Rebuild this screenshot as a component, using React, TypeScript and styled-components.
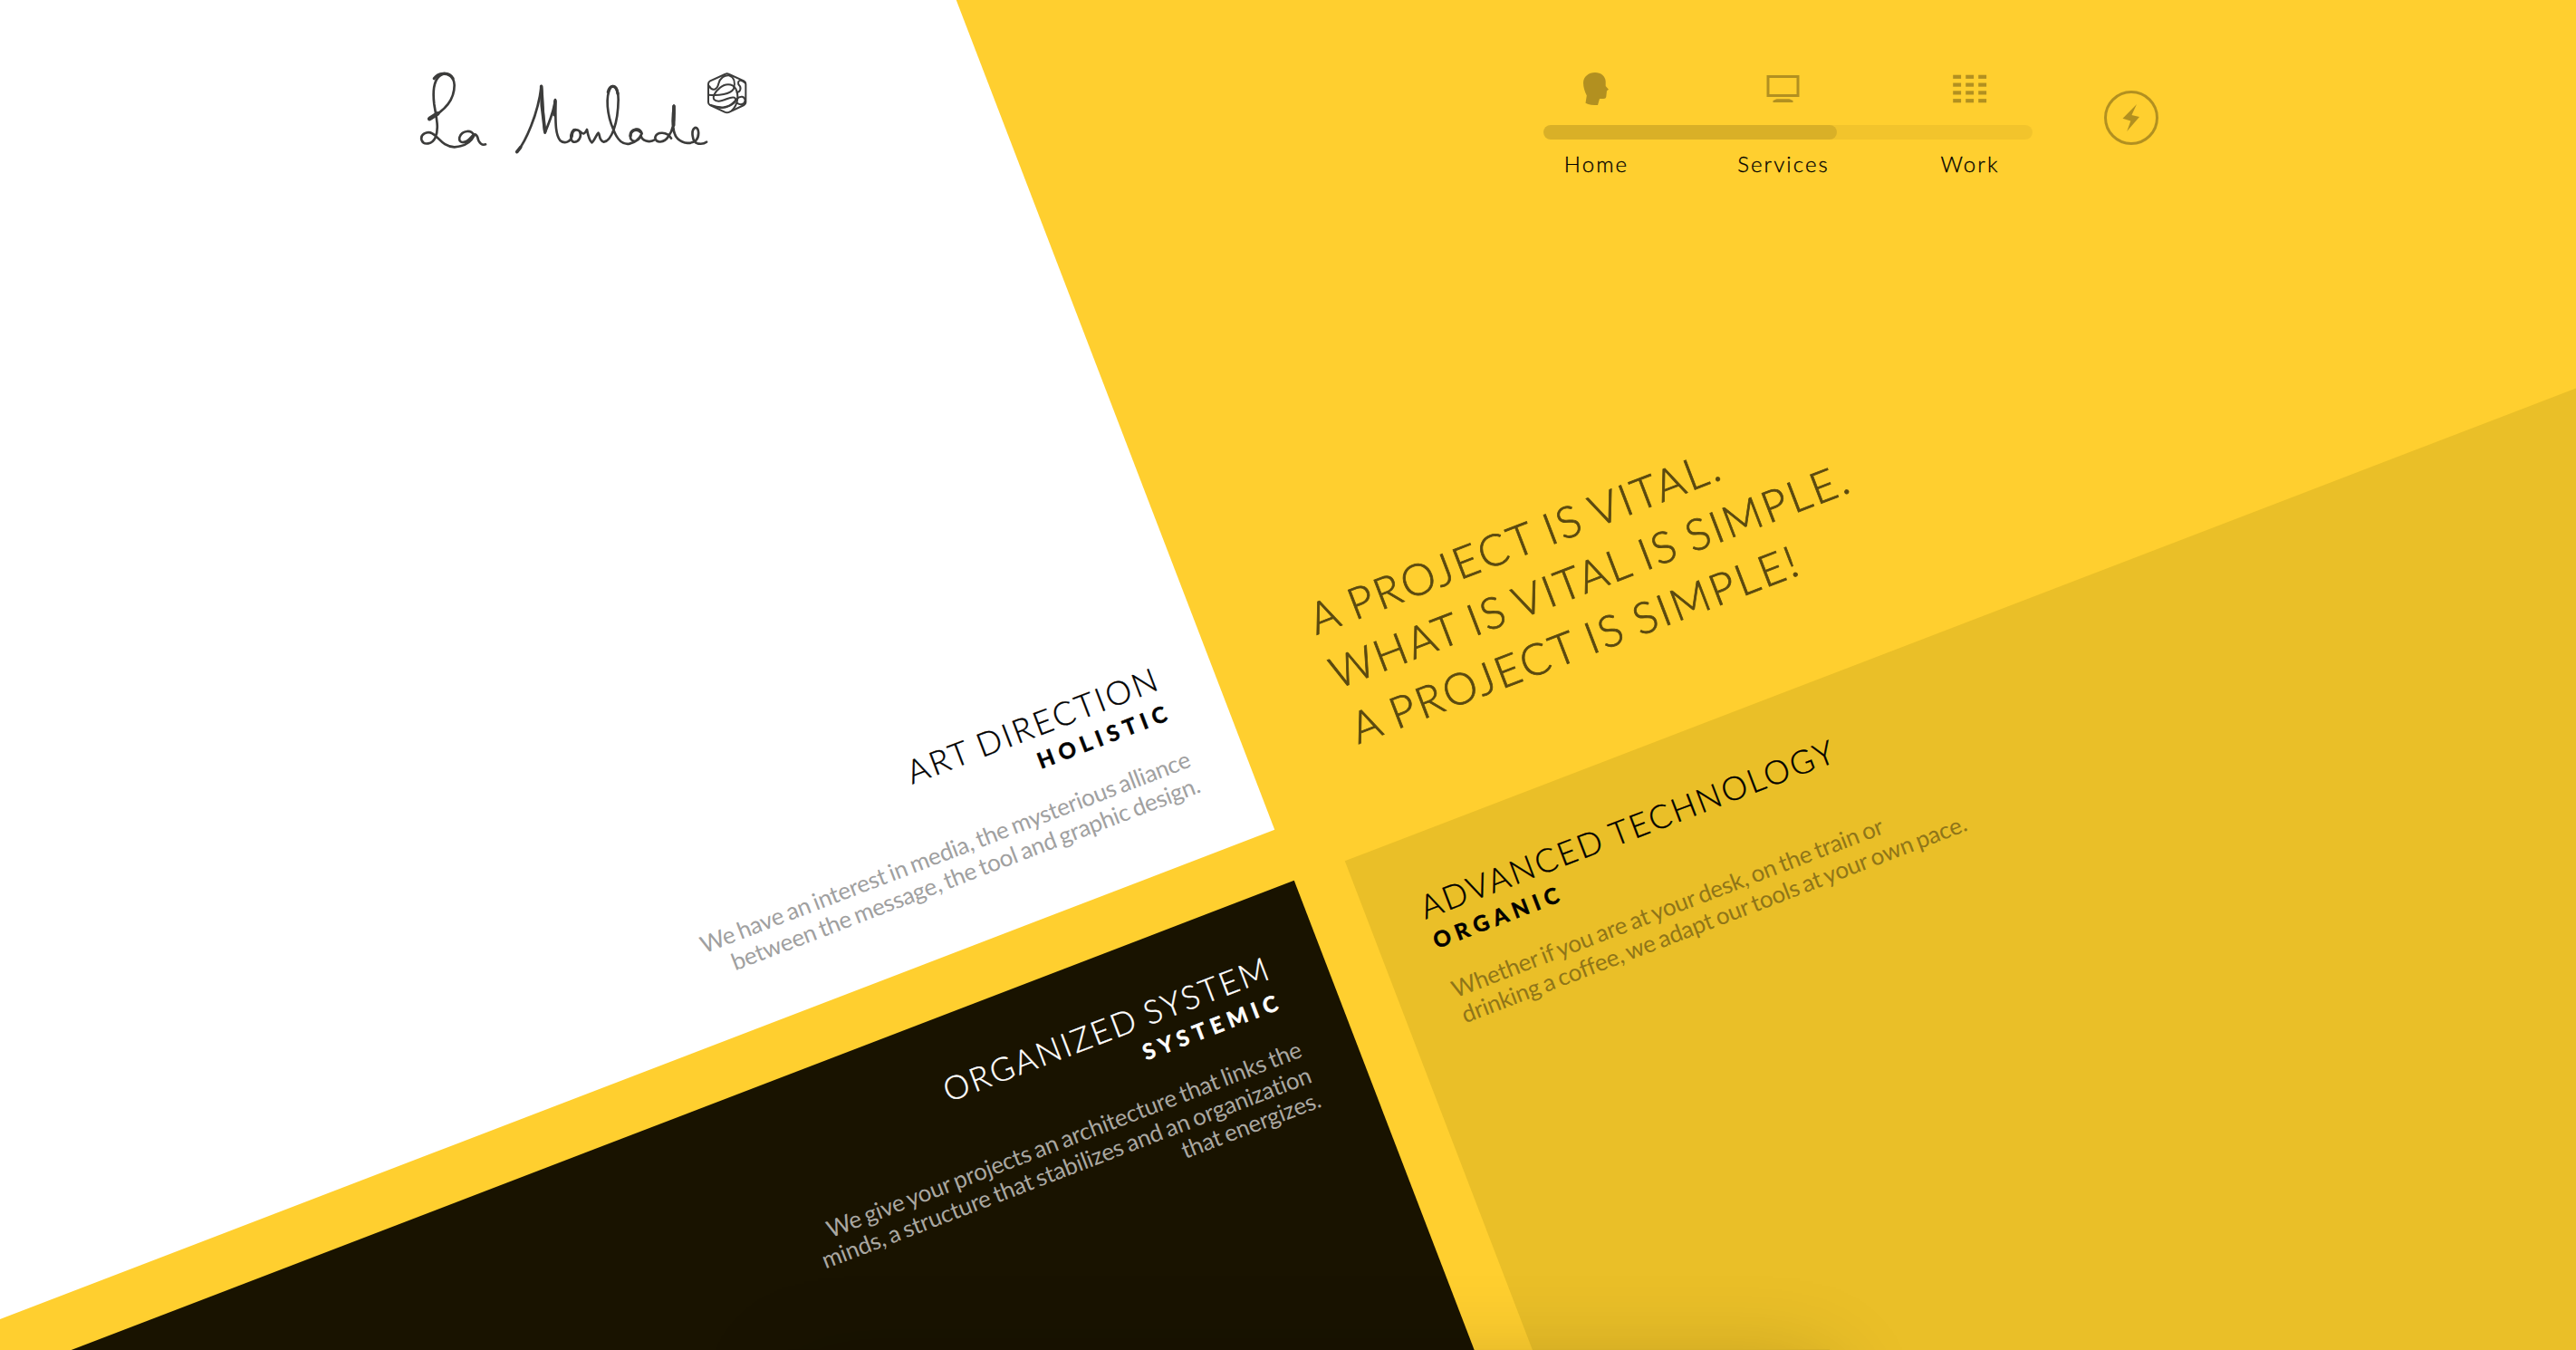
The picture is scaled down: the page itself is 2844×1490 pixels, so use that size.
import React from 'react';
import styled, { createGlobalStyle } from 'styled-components';

const GlobalStyle = createGlobalStyle`
  html, body { margin: 0; padding: 0; background: #ffcf2f; }
  * { box-sizing: border-box; }
`;

const Page = styled.main`
  position: relative;
  width: 2844px;
  height: 1490px;
  overflow: hidden;
  background: #ffcf2f;
  font-family: Lato, 'Open Sans', sans-serif;
  font-weight: 300;
  color: #000;
`;

/* Four quadrants tilted together around the crossing of the two gutters. */
const Board = styled.div`
  position: absolute;
  left: -384px;
  top: -897.5px;
  display: grid;
  grid-template: repeat(2, 1800px) / repeat(2, 1800px);
  gap: 60px;
  transform: rotate(-21deg);
`;

type Tone = 'white' | 'yellow' | 'black' | 'gold';

const toneBackground: Record<Tone, string> = {
  white: '#fff',
  yellow: 'transparent',
  black: '#191300',
  gold: '#eabf28',
};

const Quadrant = styled.section<{ $tone: Tone; $side: 'left' | 'right'; $edge: 'top' | 'bottom' }>`
  display: flex;
  flex-direction: column;
  align-items: ${(p) => (p.$side === 'left' ? 'flex-start' : 'flex-end')};
  justify-content: ${(p) => (p.$edge === 'top' ? 'flex-start' : 'flex-end')};
  text-align: ${(p) => p.$side};
  padding: 54.4px 60px 62px;
  background: ${(p) => toneBackground[p.$tone]};
  color: ${(p) => (p.$tone === 'black' ? '#fff' : '#000')};
`;

const Title = styled.h2<{ $tracking: number }>`
  margin: 0;
  font-size: 36px;
  line-height: 48px;
  font-weight: 300;
  letter-spacing: ${(p) => p.$tracking}px;
  word-spacing: -2.5px;
  text-transform: uppercase;
  -webkit-text-stroke: 0.4px currentColor;
`;

const Subtitle = styled.h3`
  margin: 0;
  font-size: 24px;
  line-height: 31px;
  font-weight: 700;
  letter-spacing: 6.1px;
  text-transform: uppercase;
  -webkit-text-stroke: 0.6px currentColor;
`;

const Description = styled.p<{ $color: string; $tracking: number }>`
  margin: 27.4px 0 0;
  max-width: 598px;
  font-size: 26px;
  line-height: 29.8px;
  font-weight: 400;
  letter-spacing: ${(p) => p.$tracking}px;
  word-spacing: -1.8px;
  color: ${(p) => p.$color};
`;

const Slogan = styled.p`
  margin: 0 0 -21px;
  font-size: 48px;
  line-height: 64.3px;
  word-spacing: -3.3px;
  text-transform: uppercase;
  color: #5a4910;
  -webkit-text-stroke: 0.8px currentColor;
`;

const SloganLine = styled.span<{ $tracking: number }>`
  display: block;
  letter-spacing: ${(p) => p.$tracking}px;
`;

const Header = styled.header`
  position: relative;
  display: flex;
  align-items: flex-start;
  padding: 76px 461px 0 460px;
`;

const Logo = styled.svg`
  width: 370px;
  height: 97px;
  fill: none;
  stroke: #3c3c3b;
  stroke-linecap: round;
  stroke-linejoin: round;
`;

const Nav = styled.nav`
  margin: 4px 79px 0 auto;
  display: grid;
  grid-template-columns: 116px 297px 115px 12px;
  grid-template-rows: 36px 16px 29px;
  row-gap: 22px;
  width: 540px;
`;

const NavIcon = styled.svg`
  width: 40px;
  height: 36px;
  justify-self: center;
  fill: rgba(0, 0, 0, 0.3);
`;

const Track = styled.div`
  grid-column: 1 / -1;
  border-radius: 8px;
  background: rgba(0, 0, 0, 0.05);
`;

const Progress = styled.div`
  width: 60%;
  height: 16px;
  border-radius: 8px;
  background: rgba(0, 0, 0, 0.1);
`;

const NavLabel = styled.a`
  justify-self: center;
  margin-top: -10px;
  padding-left: 1px;
  font-size: 24px;
  line-height: 29px;
  letter-spacing: 2.1px;
  -webkit-text-stroke: 0.3px currentColor;
`;

const BoltButton = styled.button`
  display: flex;
  align-items: center;
  justify-content: center;
  width: 60px;
  height: 60px;
  margin-top: 24px;
  padding: 0;
  border: 3px solid rgba(0, 0, 0, 0.3);
  border-radius: 50%;
  background: none;
`;

const BoltIcon = styled.svg`
  width: 20px;
  height: 32px;
  fill: rgba(0, 0, 0, 0.3);
`;

const BottomShade = styled.div`
  position: absolute;
  left: 870px;
  top: 1489px;
  width: 1150px;
  height: 400px;
  background: rgba(0, 0, 0, 0.08);
  box-shadow: 0 18px 95px rgba(0, 0, 0, 0.2);
`;

const HeadIcon = () => (
  <NavIcon viewBox="0 0 40 36">
    <path d="M19 0C25.500 0 30.500 4 30.700 10V15L34 18.700L32 20.200L31.400 25.800C31.200 28.700 30 29 27.500 29H24L22 36C17 36 12 36 8.500 33.800L9.800 25.500C7.500 21 6 16 6 11.500C6 4.500 12 0 19 0Z" />
  </NavIcon>
);

const ScreenIcon = () => (
  <NavIcon viewBox="0.500 0 40 36">
    <path fillRule="evenodd" d="M2 3H38V27H2ZM5 6V24H35V6Z" />
    <path d="M13 29.300H27L31 31V33H9V31Z" />
  </NavIcon>
);

const GridIcon = () => (
  <NavIcon viewBox="0.500 0 40 36">
    {[0, 1, 2, 3].map((row) =>
      [0, 1, 2].map((col) => (
        <rect key={`${row}-${col}`} x={1.7 + col * 14} y={2.7 + row * 8.8} width="8.9" height="4.2" />
      )),
    )}
  </NavIcon>
);

const Brand = () => (
  <Logo viewBox="60 48 1110 291" strokeWidth="8" role="img" aria-label="La Moulade">
    <path d="M100 214C128 200 185 165 185 102C183 68 160 60 145 66C118 78 112 115 118 165C125 210 135 245 122 275C112 298 84 302 77 285C70 265 95 252 112 262C135 275 145 305 185 307C220 305 240 290 250 270C245 248 210 250 202 275C198 295 220 298 240 275C252 262 256 262 262 275C265 295 278 302 288 298" />
    <path d="M103 213L130 196" strokeWidth="14" />
    <path d="M118 80C130 62 165 55 180 80" strokeWidth="10" />
    <path d="M393 323C420 290 462 200 473 105C480 150 478 220 485 260C500 220 515 190 519 150C522 200 515 260 535 285C550 298 570 290 575 270C575 250 590 245 600 255C608 275 595 292 580 290C568 285 568 262 580 250C600 244 606 266 614 262C620 260 622 252 624 249C628 270 632 285 640 292C650 285 655 265 662 260C668 265 662 285 680 290C705 286 727 230 728 150C728 110 712 98 702 110C685 140 690 200 712 250C725 285 745 300 765 296C790 290 800 275 806 262C798 240 770 245 768 270C766 290 790 296 803 270C806 285 830 295 850 282" />
    <path d="M903 278C890 255 855 255 850 275C850 295 880 295 895 270C910 250 915 210 912 170C905 220 908 265 925 280C945 298 970 297 985 285C998 270 995 240 982 243C968 250 972 290 990 295C1005 298 1015 294 1020 290" />
    <path d="M392 323L404 308M473 106L475 170L485 255M519 155L516 200M912 172L911 235" strokeWidth="11" />
    <path d="M694 125C700 100 722 98 726 130M768 270C768 250 790 243 803 258" strokeWidth="10" />
    <g strokeWidth="6" transform="translate(0 2)">
      <path d="M1081 64Q1088 60 1095 64L1144 86Q1150 89 1150 96V157Q1150 163 1144 166L1096 189Q1088 193 1080 189L1032 166Q1026 163 1026 157V96Q1026 89 1032 86Z" />
      <path d="M1029 103C1038 120 1055 118 1060 95C1065 75 1080 66 1095 68C1112 74 1116 92 1110 112C1100 130 1060 136 1027 132" />
      <path d="M1045 132C1050 122 1056 115 1063 110C1080 94 1105 92 1117 112C1128 135 1124 165 1104 184" />
      <path d="M1045 132C1040 146 1046 153 1060 153C1080 153 1098 136 1112 141C1126 150 1108 168 1078 173C1062 175 1048 171 1034 166" />
      <path d="M1056 172C1085 182 1105 163 1120 146C1132 134 1146 136 1148 150C1147 166 1130 166 1122 159" />
      <path d="M1148 93C1135 80 1122 82 1126 98C1138 108 1132 122 1121 124" />
    </g>
  </Logo>
);

export default function App() {
  return (
    <Page>
      <GlobalStyle />
      <Board>
        <Quadrant $tone="white" $side="right" $edge="bottom">
          <Title $tracking={2.7}>Art direction</Title>
          <Subtitle>Holistic</Subtitle>
          <Description $color="#a0a0a0" $tracking={-0.22}>
            We have an interest in media, the mysterious alliance between the message, the tool and graphic design.
          </Description>
        </Quadrant>
        <Quadrant $tone="yellow" $side="left" $edge="bottom">
          <Slogan>
            <SloganLine $tracking={2.87}>A project is vital.</SloganLine>
            <SloganLine $tracking={2.62}>What is vital is simple.</SloganLine>
            <SloganLine $tracking={2.87}>A project is simple!</SloganLine>
          </Slogan>
        </Quadrant>
        <Quadrant $tone="black" $side="right" $edge="top">
          <Title $tracking={2.3}>Organized system</Title>
          <Subtitle>Systemic</Subtitle>
          <Description $color="#aaa8a2" $tracking={-0.12}>
            We give your projects an architecture that links the minds, a structure that stabilizes and an organization
            that energizes.
          </Description>
        </Quadrant>
        <Quadrant $tone="gold" $side="left" $edge="top">
          <Title $tracking={2.45}>Advanced technology</Title>
          <Subtitle>Organic</Subtitle>
          <Description $color="#8f7518" $tracking={-0.18}>
            Whether if you are at your desk, on the train or drinking a coffee, we adapt our tools at your own pace.
          </Description>
        </Quadrant>
      </Board>
      <Header>
        <Brand />
        <Nav>
          <HeadIcon />
          <ScreenIcon />
          <GridIcon />
          <Track>
            <Progress />
          </Track>
          <NavLabel>Home</NavLabel>
          <NavLabel>Services</NavLabel>
          <NavLabel>Work</NavLabel>
        </Nav>
        <BoltButton aria-label="Contact">
          <BoltIcon viewBox="0 0 20 32">
            <path d="M16 1L0.500 16.800L9.300 19.500L5.200 31L19 15L10.500 13Z" />
          </BoltIcon>
        </BoltButton>
      </Header>
      <BottomShade />
    </Page>
  );
}
